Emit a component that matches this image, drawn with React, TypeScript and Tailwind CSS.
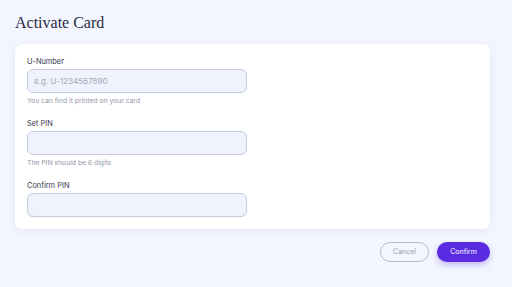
import React from 'react';

const Field: React.FC<{ label: string; placeholder?: string; hint?: string }> = ({ label, placeholder, hint }) => (
  <div className="flex flex-col">
    <label className="text-[7.4px] leading-[12px] text-[#363850]">{label}</label>
    <input
      className="mt-[1px] h-[24px] w-[220px] rounded-[6px] border border-[#c6cbdb] bg-[#eff3fd] px-[6px] text-[8px] text-[#2b2d42] outline-none placeholder:text-[#a4a9b8]"
      placeholder={placeholder}
    />
    {hint && <p className="mt-[2px] text-[6.8px] leading-[12px] text-[#9297a9]">{hint}</p>}
  </div>
);

const App: React.FC = () => {
  return (
    <div className="min-h-screen bg-[#f3f6fe] pl-[15px] pr-[22px] pt-[13px]" style={{ fontFamily: 'Inter, "Open Sans", sans-serif' }}>
      <h1 className="text-[16px] leading-[20px] text-[#2a2b45]" style={{ fontFamily: '"Liberation Serif", serif' }}>
        Activate Card
      </h1>
      <div className="mt-[11px] flex flex-col gap-[11px] rounded-[7px] bg-white px-[12px] pb-[12px] pt-[12px] shadow-[0_2px_8px_rgba(120,130,180,0.12)]">
        <Field label="U-Number" placeholder="e.g. U-1234567890" hint="You can find it printed on your card" />
        <Field label="Set PIN" hint="The PIN should be 6 digits" />
        <Field label="Confirm PIN" />
      </div>
      <div className="mt-[13px] flex justify-end gap-[8px]">
        <button className="h-[20px] w-[49px] rounded-full border border-[#b9bdcc] text-[7px] text-[#9a9fb0]">Cancel</button>
        <button className="h-[20px] w-[53px] rounded-full bg-[#5b2be2] text-[7px] text-white shadow-[0_3px_6px_rgba(91,43,226,0.3)]">Confirm</button>
      </div>
    </div>
  );
};

export default App;
